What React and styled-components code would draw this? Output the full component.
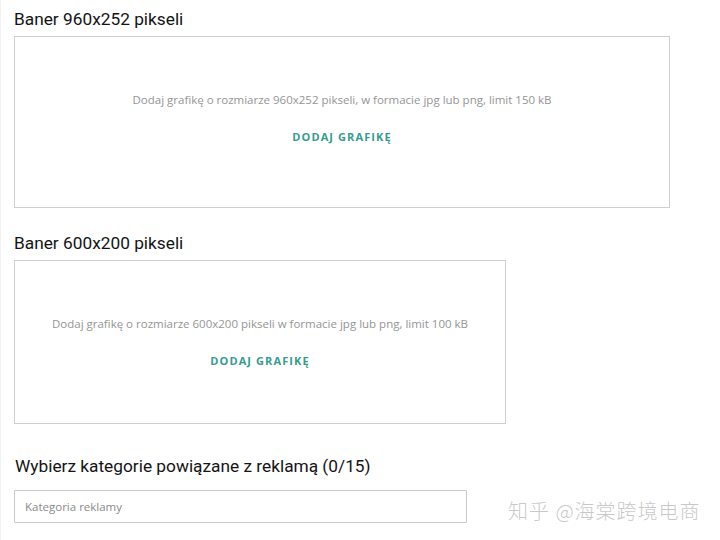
import styled, { createGlobalStyle } from "styled-components";

const GlobalStyle = createGlobalStyle`
  body {
    margin: 0;
    background: #ffffff;
  }
`;

const Page = styled.main`
  box-sizing: border-box;
  width: 720px;
  height: 540px;
  padding: 9px 0 0 13px;
  border-left: 1px solid #f2f2f2;
  overflow: hidden;
`;

const Title = styled.h2`
  margin: 0 0 7px;
  font-family: Roboto, "Liberation Sans", sans-serif;
  font-size: 17.3px;
  font-weight: 400;
  line-height: 20px;
  color: #141414;
`;

const Section = styled.section`
  margin-bottom: ${(p) => p.$gap}px;
`;

const DropBox = styled.div`
  box-sizing: border-box;
  width: ${(p) => p.$w}px;
  height: ${(p) => p.$h}px;
  border: 1px solid #cfcfcf;
  display: flex;
  flex-direction: column;
  align-items: center;
  justify-content: center;
  gap: 21px;
  padding-bottom: ${(p) => p.$shift || 0}px;
`;

const Hint = styled.p`
  margin: 0;
  font-family: "Open Sans", "Liberation Sans", sans-serif;
  font-size: 11.5px;
  line-height: 16px;
  color: #959595;
`;

const AddButton = styled.button`
  border: none;
  background: none;
  padding: 0;
  font-family: "Open Sans", "Liberation Sans", sans-serif;
  font-size: 11px;
  font-weight: 700;
  line-height: 16px;
  letter-spacing: 1.1px;
  color: #349c90;
  cursor: pointer;
`;

const CategoryTitle = styled.h2`
  margin: 0 0 13px 1px;
  font-family: Roboto, "Liberation Sans", sans-serif;
  font-size: 17.3px;
  font-weight: 400;
  line-height: 22px;
  color: #141414;
`;

const InputRow = styled.div`
  display: flex;
  align-items: flex-start;
  gap: 41px;
`;

const Input = styled.input`
  box-sizing: border-box;
  width: 453px;
  height: 33px;
  border: 1px solid #c9c9c9;
  border-radius: 1px;
  padding: 0 10px;
  font-family: "Open Sans", "Liberation Sans", sans-serif;
  font-size: 11.5px;
  color: #333;
  outline: none;
  &::placeholder {
    color: #8a8a8a;
  }
`;

const Watermark = styled.span`
  margin-top: 6px;
  font-family: "Noto Sans CJK SC", sans-serif;
  font-size: 20px;
  line-height: 29px;
  font-weight: 300;
  letter-spacing: 1px;
  color: rgba(175, 175, 175, 0.7);
  white-space: nowrap;
`;

const banners = [
  {
    title: "Baner 960x252 pikseli",
    hint: "Dodaj grafikę o rozmiarze 960x252 pikseli, w formacie jpg lub png, limit 150 kB",
    w: 656,
    h: 172,
    shift: 8,
    gap: 25,
  },
  {
    title: "Baner 600x200 pikseli",
    hint: "Dodaj grafikę o rozmiarze 600x200 pikseli w formacie jpg lub png, limit 100 kB",
    w: 492,
    h: 164,
    shift: 0,
    gap: 31,
  },
];

export default function App() {
  return (
    <>
      <GlobalStyle />
      <Page>
        {banners.map((b) => (
          <Section key={b.title} $gap={b.gap}>
            <Title>{b.title}</Title>
            <DropBox $w={b.w} $h={b.h} $shift={b.shift}>
              <Hint>{b.hint}</Hint>
              <AddButton>DODAJ GRAFIKĘ</AddButton>
            </DropBox>
          </Section>
        ))}
        <CategoryTitle>Wybierz kategorie powiązane z reklamą (0/15)</CategoryTitle>
        <InputRow>
          <Input placeholder="Kategoria reklamy" />
          <Watermark>知乎 @海棠跨境电商</Watermark>
        </InputRow>
      </Page>
    </>
  );
}
